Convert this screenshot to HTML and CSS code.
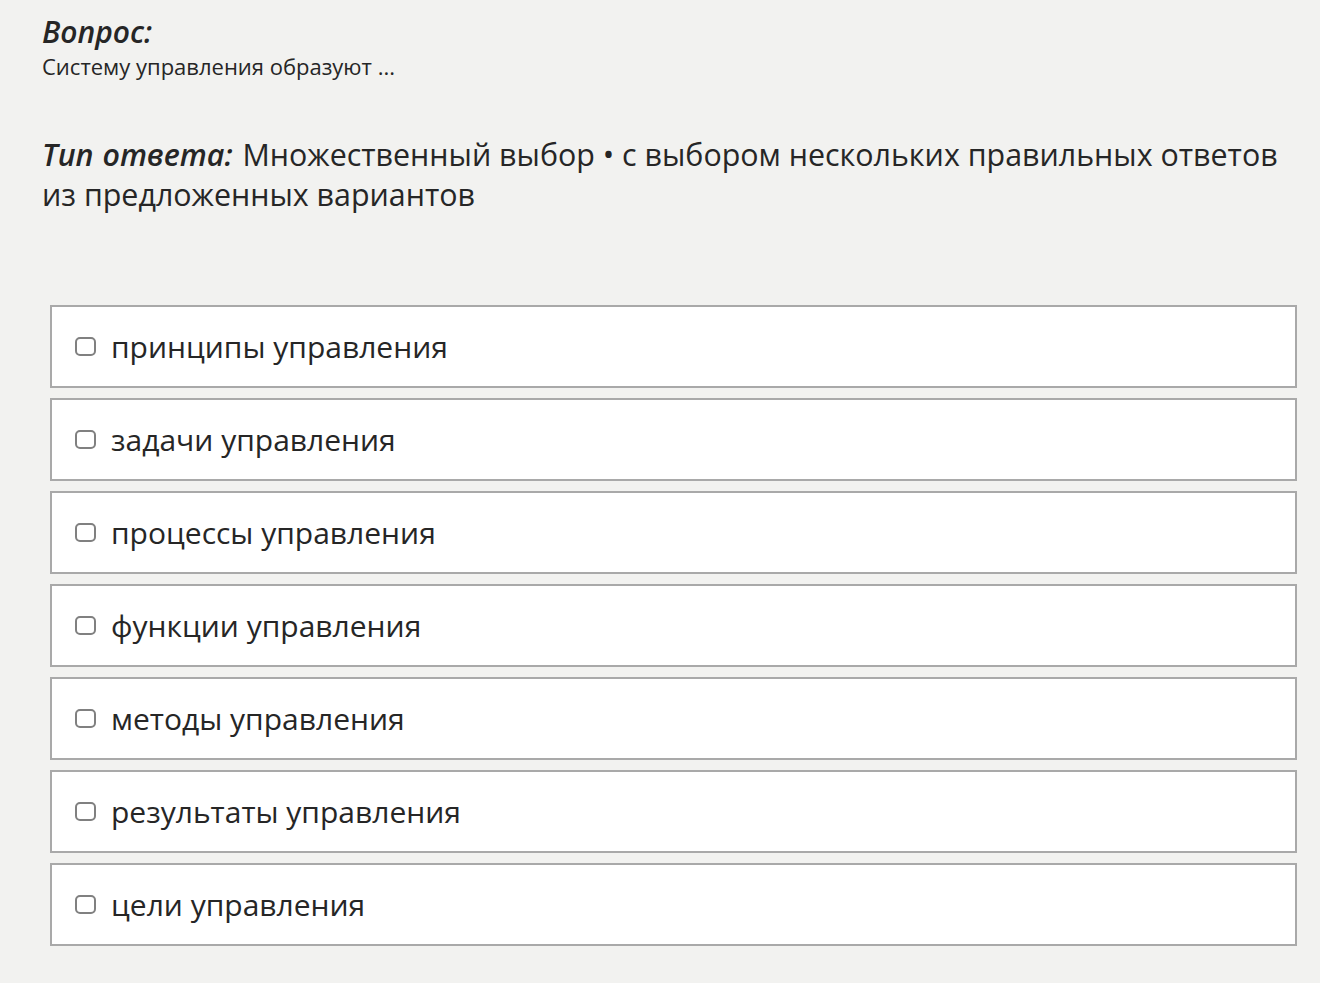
FILE: index.html
```html
<!DOCTYPE html>
<html lang="ru">
<head>
    <meta charset="UTF-8">
    <meta name="viewport" content="width=device-width, initial-scale=1.0">
    <title>Вопрос</title>
    <link rel="stylesheet" href="styles.css">
</head>
<body>

    <div class="question">
        <h2 class="question-title">Вопрос:</h2>
        <p class="question-text">Систему управления образуют ...</p>
    </div>

    <p class="answer-type"><b>Тип ответа:</b> Множественный выбор • с выбором нескольких правильных ответов из предложенных вариантов</p>

    <div class="options">
        <label class="option"><span class="check"></span>принципы управления</label>
        <label class="option"><span class="check"></span>задачи управления</label>
        <label class="option"><span class="check"></span>процессы управления</label>
        <label class="option"><span class="check"></span>функции управления</label>
        <label class="option"><span class="check"></span>методы управления</label>
        <label class="option"><span class="check"></span>результаты управления</label>
        <label class="option"><span class="check"></span>цели управления</label>
    </div>

</body>
</html>
```

FILE: styles.css
```css
body {
    font-family: "Open Sans", "Noto Sans", sans-serif;
    background-color: #f2f2f0;
    color: #262626;
    margin: 0;
    padding: 12px 23px 0 42px;
}

.question-title {
    font-size: 30px;
    font-style: italic;
    font-weight: 600;
    margin: 0;
    line-height: 40px;
}

.question-text {
    font-size: 22px;
    margin: -1px 0 0;
    line-height: 30px;
}

.answer-type {
    font-size: 30.4px;
    line-height: 40px;
    margin: 54px 0 0;
}

.answer-type b {
    font-style: italic;
    font-weight: 600;
    word-spacing: 1px;
    margin-right: 2px;
}

.options {
    display: flex;
    flex-direction: column;
    gap: 10px;
    margin: 90px 0 0 8px;
}

.option {
    display: flex;
    align-items: center;
    gap: 15px;
    height: 79px;
    padding: 0 23px;
    background-color: #fff;
    border: 2px solid #a9a9a9;
    font-size: 30px;
    cursor: pointer;
}

.check {
    width: 17px;
    height: 15px;
    border: 2px solid #808080;
    border-radius: 5px;
    margin-top: -1px;
}
```
